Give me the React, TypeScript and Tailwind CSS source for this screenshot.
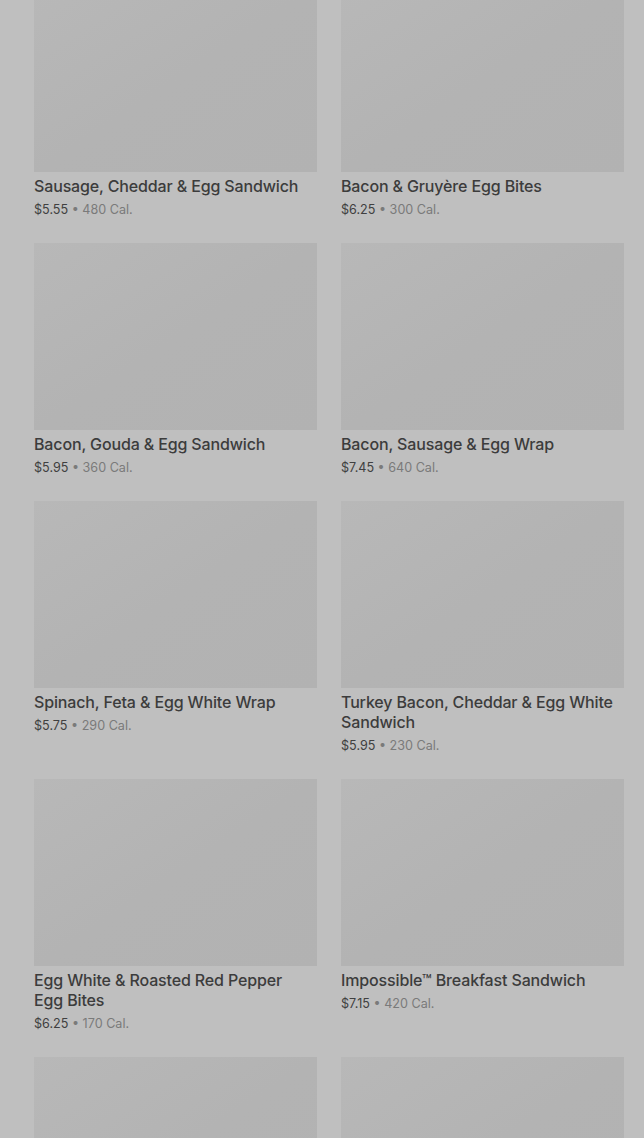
import React from "react";

type Item = { name?: string; price?: string; cal?: string };

const items: Item[] = [
  { name: "Sausage, Cheddar & Egg Sandwich", price: "$5.55", cal: "480 Cal." },
  { name: "Bacon & Gruyère Egg Bites", price: "$6.25", cal: "300 Cal." },
  { name: "Bacon, Gouda & Egg Sandwich", price: "$5.95", cal: "360 Cal." },
  { name: "Bacon, Sausage & Egg Wrap", price: "$7.45", cal: "640 Cal." },
  { name: "Spinach, Feta & Egg White Wrap", price: "$5.75", cal: "290 Cal." },
  { name: "Turkey Bacon, Cheddar & Egg White Sandwich", price: "$5.95", cal: "230 Cal." },
  { name: "Egg White & Roasted Red Pepper Egg Bites", price: "$6.25", cal: "170 Cal." },
  { name: "Impossible™ Breakfast Sandwich", price: "$7.15", cal: "420 Cal." },
  {},
  {},
];

function Card({ item }: { item: Item }) {
  return (
    <div className="flex flex-col">
      <div className="h-[187px] w-full bg-gradient-to-br from-[#b8b8b8] via-[#b3b3b3] to-[#b2b2b2]" />
      {item.name && (
        <>
          <div className="mt-[4px] pr-[8px] text-[16px] leading-5 font-medium tracking-[-0.14px] text-[#3c3c3c]">
            {item.name}
          </div>
          <div className="mt-[4px] text-[12.6px] leading-5 text-[#404040]">
            {item.price}
            <span className="text-[#7a7a7a]"> • {item.cal}</span>
          </div>
        </>
      )}
    </div>
  );
}

export default function App() {
  return (
    <div
      className="h-[1138px] w-full overflow-hidden bg-[#bfbfbf]"
      style={{ fontFamily: "Inter, 'Liberation Sans', sans-serif" }}
    >
      <div className="-mt-[15px] grid grid-cols-2 gap-x-6 gap-y-[23px] pl-[34px] pr-[20px]">
        {items.map((it, i) => (
          <Card key={i} item={it} />
        ))}
      </div>
    </div>
  );
}
